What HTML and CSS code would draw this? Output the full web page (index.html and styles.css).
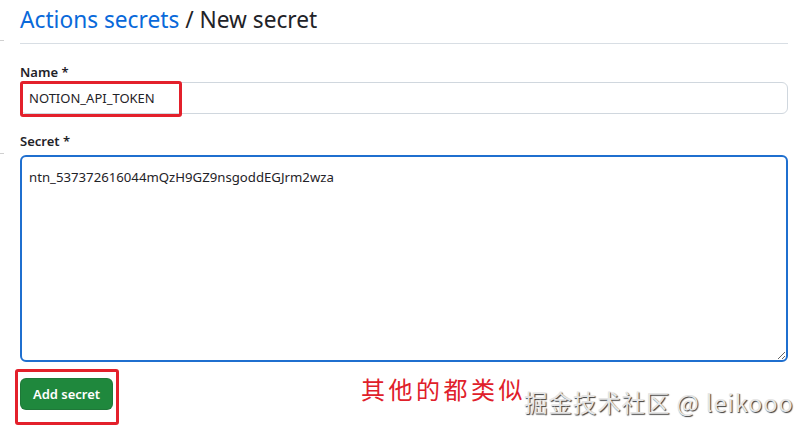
FILE: index.html
```html
<!DOCTYPE html>
<html lang="zh">
<head>
<meta charset="utf-8">
<title>New secret</title>
<link rel="stylesheet" href="styles.css">
</head>
<body>
<span class="tick tick-top"></span>
<span class="tick tick-mid"></span>
<main class="page">
  <h1 class="title"><a class="crumb" href="#">Actions secrets</a> / New secret</h1>
  <form class="form">
    <label class="label label-name" for="name">Name *</label>
    <div class="field">
      <input id="name" class="input" type="text" value="NOTION_API_TOKEN">
      <span class="mark mark-name"></span>
    </div>
    <label class="label label-secret" for="secret">Secret *</label>
    <textarea id="secret" class="textarea">ntn_537372616044mQzH9GZ9nsgoddEGJrm2wza</textarea>
    <div class="actions">
      <div class="btn-wrap">
        <button type="button" class="btn">Add secret</button>
        <span class="mark mark-btn"></span>
      </div>
    </div>
  </form>
</main>
<div class="note">其他的都类似</div>
<div class="watermark">掘金技术社区 @ leikooo</div>
</body>
</html>
```

FILE: styles.css
```css
* { box-sizing: border-box; }
html, body { margin: 0; padding: 0; background: #fff; }
body {
  font-family: "Noto Sans", "Open Sans", "Noto Sans CJK SC", sans-serif;
  color: #1f2328;
  width: 812px;
  height: 435px;
  overflow: hidden;
  position: relative;
}
.page { padding: 0 24px 0 20px; }
.title {
  margin: 0;
  padding-top: 2px;
  padding-bottom: 5px;
  font-size: 22.7px;
  font-weight: 400;
  line-height: 36px;
  border-bottom: 1px solid #d8dee4;
  color: #1f2328;
}
.crumb { color: #0969da; text-decoration: none; }
.form { display: flex; flex-direction: column; }
.label {
  display: block;
  font-size: 13px;
  font-weight: 600;
  line-height: 20px;
}
.label-name { margin-top: 18px; }
.label-secret { margin-top: 17px; margin-bottom: 4px; }
.field { position: relative; }
.input {
  display: block;
  width: 100%;
  height: 32px;
  padding: 0 8px;
  font-family: inherit;
  font-size: 13px;
  color: #1f2328;
  border: 1px solid #d0d7de;
  border-radius: 6px;
  background: #fff;
  outline: none;
}
.textarea {
  display: block;
  width: 100%;
  height: 207px;
  padding: 10px 7px;
  font-family: inherit;
  font-size: 13.2px;
  line-height: 20px;
  color: #1f2328;
  border: 2px solid #1f6fcf;
  border-radius: 6px;
  background: #fff;
  outline: none;
  resize: vertical;
}
.actions { margin-top: 16px; display: flex; }
.btn-wrap { position: relative; }
.btn {
  height: 32px;
  width: 93px;
  padding: 0;
  font-family: inherit;
  font-size: 13px;
  font-weight: 600;
  color: #fff;
  background: #1f883d;
  border: 1px solid rgba(31,35,40,0.15);
  border-radius: 6px;
}
.mark {
  position: absolute;
  border: 3px solid #e3202b;
  border-radius: 3px;
  pointer-events: none;
}
.mark-name { left: 0; top: -1px; width: 162px; height: 36px; }
.mark-btn { left: -5px; top: -9px; width: 104px; height: 56px; }
.note {
  position: absolute;
  left: 361px;
  top: 372px;
  font-family: "Noto Sans CJK SC", sans-serif;
  font-size: 24px;
  letter-spacing: 3.5px;
  line-height: 34px;
  color: #e0202a;
}
.watermark {
  position: absolute;
  left: 524px;
  top: 386px;
  font-family: "Noto Sans CJK SC", "Noto Sans", sans-serif;
  font-size: 23.5px;
  letter-spacing: 0.9px;
  line-height: 32px;
  color: #e6e6e6;
  text-shadow: 1px 1px 1px #3a3a3a;
  white-space: nowrap;
}
.tick { position: absolute; left: 0; width: 4px; height: 1px; background: #d0d0d0; }
.tick-top { top: 40px; }
.tick-mid { top: 153px; }
```
